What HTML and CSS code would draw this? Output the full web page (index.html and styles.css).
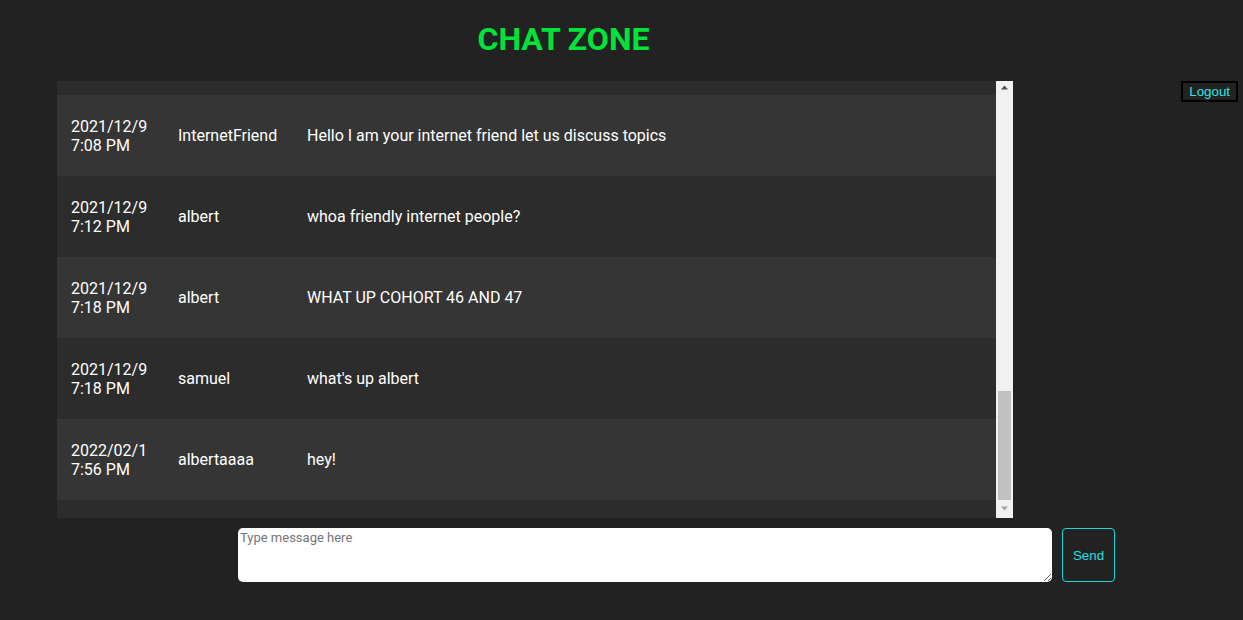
FILE: index.html
```html
<!DOCTYPE html>
<html lang="en">
<head>
<meta charset="utf-8">
<title>Chat Zone</title>
<link rel="stylesheet" href="styles.css">
</head>
<body>
<div class="page">
  <main class="main">
    <h1 class="title">CHAT ZONE</h1>
    <div class="chat">
      <div class="list">
        <div class="row-tail"></div>
        <div class="row light"><div class="c-date">2021/12/9 7:08 PM</div><div class="c-user">InternetFriend</div><div class="c-msg">Hello I am your internet friend let us discuss topics</div></div>
        <div class="row"><div class="c-date">2021/12/9 7:12 PM</div><div class="c-user">albert</div><div class="c-msg">whoa friendly internet people?</div></div>
        <div class="row light"><div class="c-date">2021/12/9 7:18 PM</div><div class="c-user">albert</div><div class="c-msg">WHAT UP COHORT 46 AND 47</div></div>
        <div class="row"><div class="c-date">2021/12/9 7:18 PM</div><div class="c-user">samuel</div><div class="c-msg">what's up albert</div></div>
        <div class="row light"><div class="c-date">2022/02/1 7:56 PM</div><div class="c-user">albertaaaa</div><div class="c-msg">hey!</div></div>
      </div>
      <div class="scrollbar">
        <div class="sb-btn">
          <svg width="17" height="17" viewBox="0 0 17 17"><path d="M5 8.5h7L8.5 4.5z" fill="#505050"/></svg>
        </div>
        <div class="sb-track"><div class="sb-thumb"></div></div>
        <div class="sb-btn">
          <svg width="17" height="17" viewBox="0 0 17 17"><path d="M5 5.5h7L8.5 9.5z" fill="#a3a3a3"/></svg>
        </div>
      </div>
    </div>
    <form class="composer">
      <textarea class="input" placeholder="Type message here"></textarea>
      <button type="button" class="send">Send</button>
    </form>
  </main>
  <aside class="side">
    <button type="button" class="logout">Logout</button>
  </aside>
</div>
</body>
</html>
```

FILE: styles.css
```css
html, body {
  margin: 0;
  padding: 0;
  background: #222222;
}

body {
  font-family: Roboto, "Liberation Sans", sans-serif;
  color: #ffffff;
}

.page {
  display: flex;
  height: 620px;
}

.main {
  width: 1127px;
  flex: none;
  padding-top: 21px;
  box-sizing: border-box;
}

.title {
  margin: 0 0 23px;
  font-size: 32px;
  line-height: 37px;
  font-weight: 700;
  color: #00e33a;
  text-align: center;
}

.chat {
  margin-left: 57px;
  width: 956px;
  height: 437px;
  display: flex;
  background: #2c2c2c;
}

.list {
  flex: 1;
  display: flex;
  flex-direction: column;
  padding-bottom: 18px;
}

.row-tail {
  height: 14px;
  background: #2c2c2c;
}

.row {
  display: grid;
  grid-template-columns: 107px 129px 1fr;
  align-items: center;
  height: 81px;
  padding-left: 14px;
  box-sizing: border-box;
  font-size: 16px;
  background: #2c2c2c;
}

.row.light {
  background: #353535;
}

.c-date {
  padding-right: 14px;
}

.scrollbar {
  width: 17px;
  flex: none;
  display: flex;
  flex-direction: column;
  background: #f1f1f1;
}

.sb-btn {
  height: 17px;
  flex: none;
}

.sb-btn svg {
  display: block;
}

.sb-track {
  flex: 1;
  display: flex;
  flex-direction: column;
  justify-content: flex-end;
  padding: 0 2px 1px;
}

.sb-thumb {
  height: 109px;
  background: #c1c1c1;
}

.composer {
  display: flex;
  gap: 10px;
  margin: 10px 0 0 238px;
}

.input {
  width: 814px;
  height: 54px;
  box-sizing: border-box;
  border: none;
  border-radius: 5px;
  padding: 2px;
  background: #ffffff;
  font-family: Roboto, "Liberation Sans", sans-serif;
  font-size: 13px;
  color: #000;
  resize: both;
  margin: 0;
}

.input::placeholder {
  color: #757575;
}

.send {
  width: 53px;
  height: 54px;
  box-sizing: border-box;
  border: 1px solid #1fd6d6;
  border-radius: 4px;
  background: #222222;
  color: #22e0e0;
  font-family: "Liberation Sans", Arial, sans-serif;
  font-size: 13.33px;
  padding: 0;
}

.side {
  flex: 1;
  display: flex;
  justify-content: flex-end;
  align-items: flex-start;
  padding: 81px 5px 0 0;
}

.logout {
  height: 21px;
  box-sizing: border-box;
  border: 2px solid #000000;
  background: #222222;
  color: #2ae6e6;
  font-family: "Liberation Sans", Arial, sans-serif;
  font-size: 13.33px;
  line-height: 15px;
  padding: 0 6px;
}
```
